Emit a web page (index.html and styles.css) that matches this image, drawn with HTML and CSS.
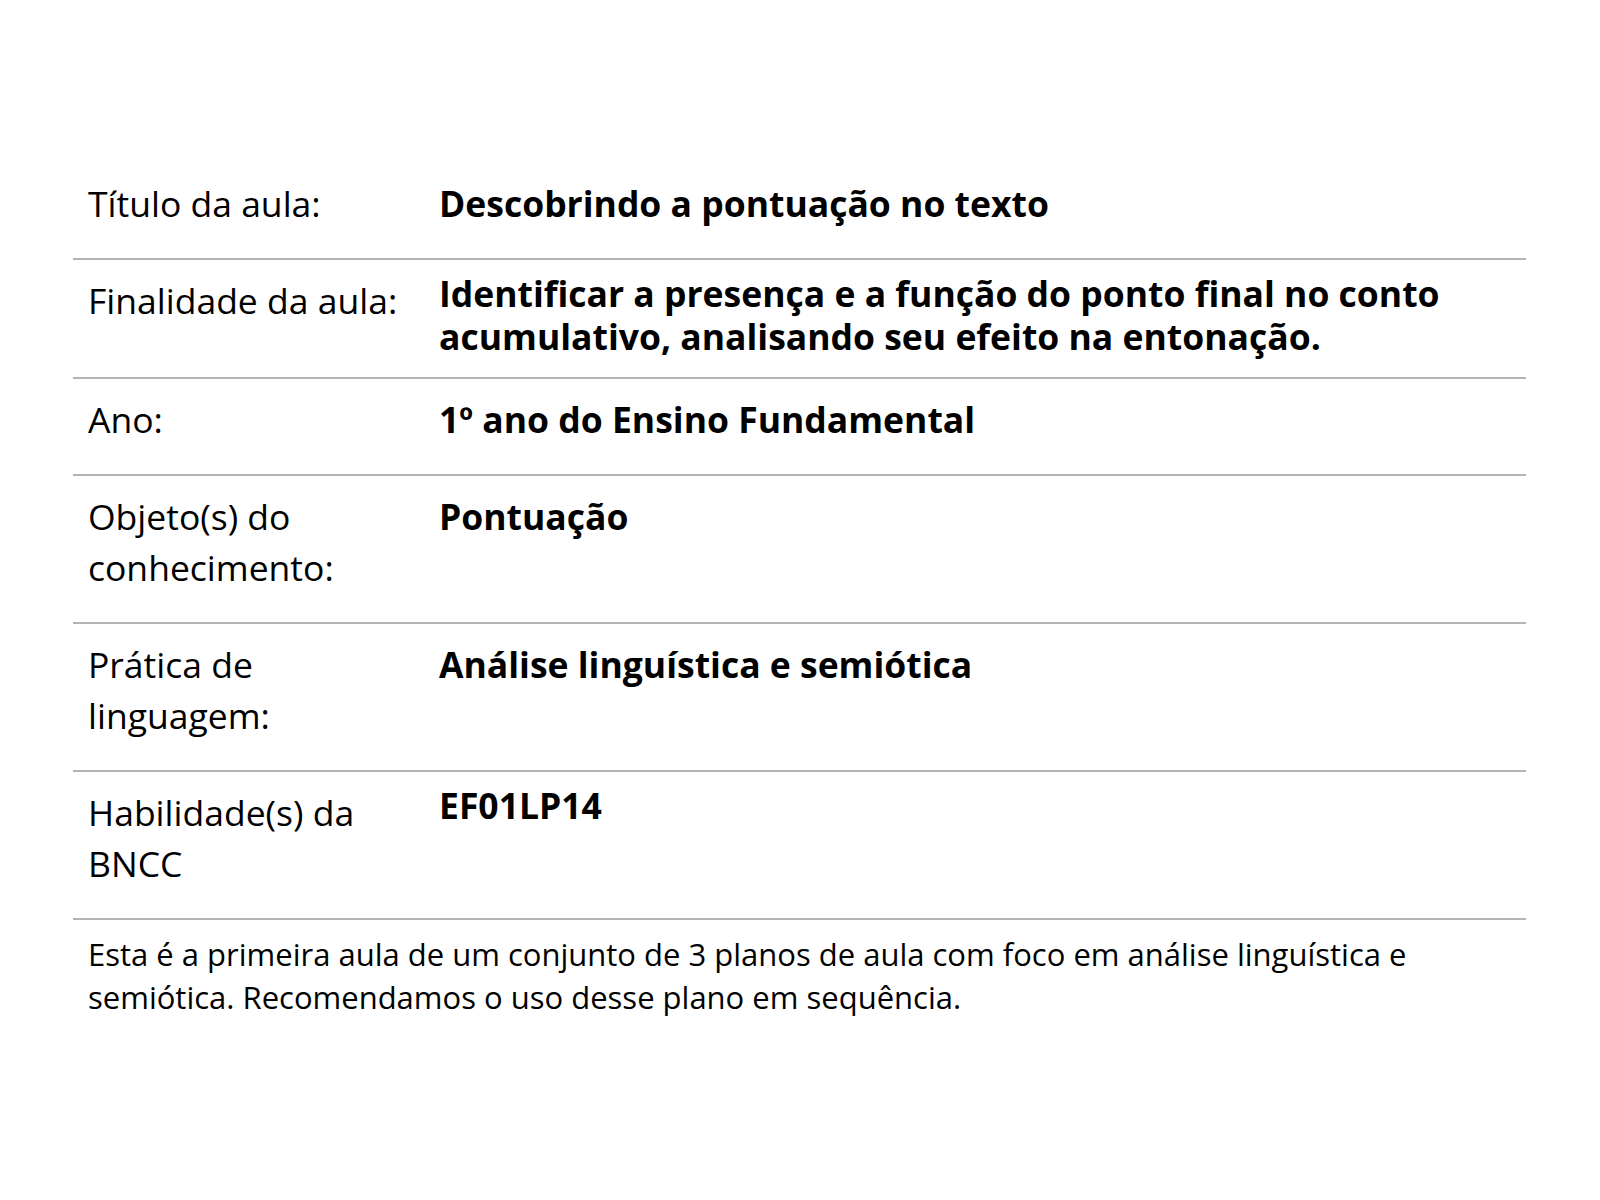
FILE: index.html
```html
<!DOCTYPE html>
<html lang="pt-BR">
<head>
<meta charset="utf-8">
<title>Plano de aula</title>
<link rel="stylesheet" href="styles.css">
</head>
<body>
<main class="plan">
  <div class="row">
    <div class="label">Título da aula:</div>
    <div class="value">Descobrindo a pontuação no texto</div>
  </div>
  <div class="row">
    <div class="label">Finalidade da aula:</div>
    <div class="value value--raised">Identificar a presença e a função do ponto final no conto acumulativo, analisando seu efeito na entonação.</div>
  </div>
  <div class="row">
    <div class="label">Ano:</div>
    <div class="value">1º ano do Ensino Fundamental</div>
  </div>
  <div class="row">
    <div class="label">Objeto(s) do conhecimento:</div>
    <div class="value">Pontuação</div>
  </div>
  <div class="row">
    <div class="label">Prática de linguagem:</div>
    <div class="value">Análise linguística e semiótica</div>
  </div>
  <div class="row">
    <div class="label">Habilidade(s) da BNCC</div>
    <div class="value value--raised">EF01LP14</div>
  </div>
  <p class="note">Esta é a primeira aula de um conjunto de 3 planos de aula com foco em análise linguística e semiótica. Recomendamos o uso desse plano em sequência.</p>
</main>
</body>
</html>
```

FILE: styles.css
```css
html, body {
  margin: 0;
  padding: 0;
  background: #ffffff;
}

body {
  font-family: "Open Sans", "Noto Sans", sans-serif;
  color: #000000;
}

.plan {
  width: 1453px;
  margin: 0 0 0 73px;
  padding-top: 163px;
}

.row {
  display: grid;
  grid-template-columns: 366px 1fr;
  align-items: start;
  padding: 15px 0 16px;
  border-bottom: 2px solid #b4b4b4;
}

.label {
  font-size: 35.5px;
  line-height: 51px;
  padding-left: 15px;
  padding-bottom: 13px;
  padding-right: 20px;
}

.value {
  font-size: 35.5px;
  font-weight: 700;
  line-height: 43px;
  padding-top: 4px;
  padding-right: 60px;
}

.value--raised {
  padding-top: 0;
  padding-bottom: 3px;
  margin-top: -3px;
}

.note {
  margin: 0;
  padding: 13px 40px 0 15px;
  font-size: 31px;
  line-height: 43px;
}
```
